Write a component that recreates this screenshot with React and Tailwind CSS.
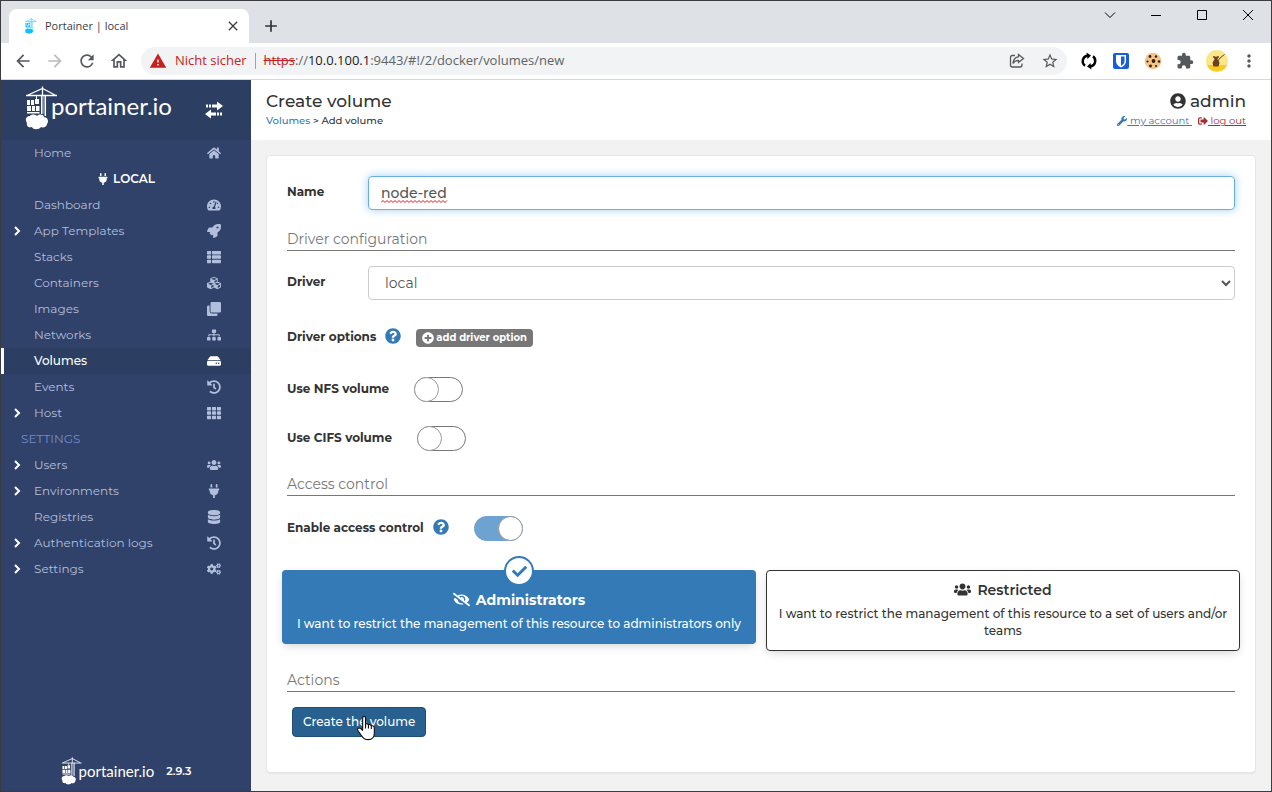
import React, { useState } from "react";
import {
  FaHome, FaTachometerAlt, FaRocket, FaThList, FaCubes, FaClone, FaSitemap, FaHdd, FaHistory,
  FaTh, FaUsers, FaPlug, FaDatabase, FaCogs, FaWrench, FaSignOutAlt, FaUserCircle,
  FaQuestionCircle, FaPlusCircle, FaEyeSlash, FaCheck,
} from "react-icons/fa";
import {
  MdArrowBack, MdArrowForward, MdRefresh, MdOutlineHome, MdWarning, MdStarBorder, MdMoreVert, MdClose, MdAdd, MdExtension,
} from "react-icons/md";

const NAV = [
  { label: "Home", Icon: FaHome },
  { heading: "LOCAL", Icon: FaPlug },
  { label: "Dashboard", Icon: FaTachometerAlt },
  { label: "App Templates", Icon: FaRocket, sub: true },
  { label: "Stacks", Icon: FaThList },
  { label: "Containers", Icon: FaCubes },
  { label: "Images", Icon: FaClone },
  { label: "Networks", Icon: FaSitemap },
  { label: "Volumes", Icon: FaHdd, active: true },
  { label: "Events", Icon: FaHistory },
  { label: "Host", Icon: FaTh, sub: true },
  { section: "SETTINGS" },
  { label: "Users", Icon: FaUsers, sub: true },
  { label: "Environments", Icon: FaPlug, sub: true },
  { label: "Registries", Icon: FaDatabase },
  { label: "Authentication logs", Icon: FaHistory, sub: true },
  { label: "Settings", Icon: FaCogs, sub: true },
];

function Crane({ className }) {
  return (
    <svg viewBox="0 0 34 44" className={className} fill="none" stroke="currentColor" aria-hidden="true">
      <path d="M1 9.500H32M3 9L17.500 2.500L30 9M17.500 0.500V9" strokeWidth="1.300" />
      <path d="M16.800 9V28M20.300 9V30" strokeWidth="1.500" />
      <path d="M18.600 10V28" strokeWidth="0.800" opacity="0.500" />
      <path d="M11.500 9.500V13" strokeWidth="1" />
      <path d="M10 13H14V18H10ZM2 14H5V19H2ZM6 14H9V19H6ZM2 20H6V25H2ZM7 20H10V25H7ZM11 20H14.500V25H11ZM2 26H14.500V27.500H2Z" fill="currentColor" stroke="none" />
      <path d="M5 30C6 28 10 28 12 30C14 28 18 28 19 31C23 31 24 36 22 38C22 41 18 42 16 41C14 44 8 44 7 41C4 42 1 40 2 37C-0.500 34 1 30 5 30Z" fill="currentColor" stroke="none" />
    </svg>
  );
}

function SwapIcon() {
  return (
    <svg viewBox="0 0 20 18" className="h-[18px] w-5" fill="currentColor" aria-hidden="true">
      <path d="M2 3.500h2v3H2zM5 3.500h2v3H5zM8 3.500h5V0.500L19 5L13 9.500V6.500H8z" />
      <path d="M18 11.500h-2v3h2zM15 11.500h-2v3h2zM12 11.500H7V8.500L1 13L7 17.500V14.500h5z" />
    </svg>
  );
}

function TabStrip() {
  return (
    <div className="flex h-[42px] items-end bg-[#dee1e6] pl-2">
      <div className="flex h-[34px] w-60 items-center rounded-t-lg bg-white pl-3 pr-2">
        <span className="flex w-5 justify-center text-[#13bef9]"><Crane className="h-4 w-4" /></span>
        <span className="ml-1 flex-1 text-[11px] text-[#3c4043]">Portainer | local</span>
        <button type="button" aria-label="Close tab" className="text-[#3c4043]"><MdClose size={16} /></button>
      </div>
      <button type="button" aria-label="New tab" className="ml-3 flex h-[34px] items-center text-[#303236]"><MdAdd size={20} /></button>
      <div className="ml-auto mr-[17px] flex h-[42px] items-start gap-[34px] pt-[7px] text-black">
        <button type="button" aria-label="Search tabs"><svg width="12" height="14" viewBox="0 0 12 14" fill="none" stroke="currentColor"><path d="M1 4.500L6 9.500L11 4.500" /></svg></button>
        <button type="button" aria-label="Minimize"><svg width="12" height="14" viewBox="0 0 12 14" stroke="currentColor"><path d="M1 7.500H11" /></svg></button>
        <button type="button" aria-label="Maximize"><svg width="12" height="14" viewBox="0 0 12 14" fill="none" stroke="currentColor"><path d="M1.500 2.500H10.500V11.500H1.500Z" /></svg></button>
        <button type="button" aria-label="Close"><svg width="12" height="14" viewBox="0 0 12 14" stroke="currentColor"><path d="M1 2L11 12M11 2L1 12" /></svg></button>
      </div>
    </div>
  );
}

function Toolbar() {
  return (
    <div className="flex h-[37px] items-center border-b border-[#d5d7da] bg-white pl-3 pr-3 text-[#55585c]">
      <div className="flex items-center gap-3">
        <button type="button" aria-label="Back"><MdArrowBack size={20} /></button>
        <button type="button" aria-label="Forward" className="text-[#b9bbbe]"><MdArrowForward size={20} /></button>
        <button type="button" aria-label="Reload"><MdRefresh size={20} /></button>
        <button type="button" aria-label="Start page"><MdOutlineHome size={20} /></button>
      </div>
      <div className="ml-3 flex h-7 min-w-0 flex-1 items-center rounded-full bg-[#f1f3f4] pl-2 pr-2 text-[13px]">
        <MdWarning size={18} className="text-[#c5221f]" />
        <span className="ml-2 whitespace-nowrap text-[#c5221f]">Nicht sicher</span>
        <span className="mx-2 h-4 w-px bg-[#9fa2a6]" />
        <span className="flex-1 whitespace-nowrap text-[#5f6368]">
          <s className="text-[#c5221f]">https</s>://<span className="text-[#202124]">10.0.100.1</span>:9443/#!/2/docker/volumes/new
        </span>
        <div className="flex items-center gap-4">
          <button type="button" aria-label="Share">
            <svg width="16" height="16" viewBox="0 0 16 16" fill="none" stroke="currentColor" strokeWidth="1.300"><path d="M6 2.500H3.500Q1.500 2.500 1.500 4.500V12Q1.500 14 3.500 14H11Q13 14 13 12V10.500" /><path d="M9.500 1.500L14.500 5.500L9.500 9.500V7.300Q6 7.200 4 10.500Q4.500 4.500 9.500 3.800Z" /></svg>
          </button>
          <button type="button" aria-label="Bookmark"><MdStarBorder size={18} /></button>
        </div>
      </div>
      <div className="ml-3 flex items-center gap-3">
        <button type="button" aria-label="Sync" className="text-black">
          <svg width="20" height="20" viewBox="0 0 20 20" fill="none" stroke="currentColor" strokeWidth="2.400"><path d="M8.500 4.500A5.800 5.800 0 0 0 6 14.800M11.500 15.500A5.800 5.800 0 0 0 14 5.200" /><path d="M7.500 1.500L12 4.500L8.500 8ZM12.500 18.500L8 15.500L11.500 12Z" fill="currentColor" stroke="none" /></svg>
        </button>
        <button type="button" aria-label="Password manager">
          <svg width="20" height="20" viewBox="0 0 20 20"><rect x="2" y="2" width="16" height="16" rx="2" fill="#175ddc" /><path d="M5 4H15V10Q15 14 10 16.500Q5 14 5 10Z" fill="#fff" /><path d="M10 5.500H13.500V10Q13.500 13 10 14.800Z" fill="#175ddc" /></svg>
        </button>
        <button type="button" aria-label="Cookies">
          <svg width="20" height="20" viewBox="0 0 20 20"><circle cx="10" cy="10" r="8.300" fill="#f2c588" /><g fill="#3a1d10"><circle cx="7" cy="5.500" r="1.400" /><circle cx="13" cy="5.500" r="1.200" /><circle cx="10.500" cy="10" r="1.900" /><circle cx="4.500" cy="10.500" r="1.100" /><circle cx="16" cy="10.500" r="1.300" /><circle cx="7.500" cy="15" r="1.400" /><circle cx="13" cy="15" r="1.100" /></g></svg>
        </button>
        <button type="button" aria-label="Extensions"><MdExtension size={18} className="mx-px" /></button>
        <button type="button" aria-label="Profile" className="-mx-px">
          <svg width="22" height="22" viewBox="0 0 22 22"><circle cx="11" cy="11" r="11" fill="#fbe68a" /><path d="M1 15A11 11 0 0 0 21 15Z" fill="#fbc91f" /><path d="M8 10H12.500L13.500 13L12.500 16.500H7.500L6.500 13Z" fill="#6b4121" /><circle cx="10" cy="8.500" r="1.900" fill="#6b4121" /><circle cx="8" cy="7" r="1" fill="#6b4121" /><circle cx="12" cy="7" r="1" fill="#6b4121" /><path d="M11 12L14 8L18.500 4.500" fill="none" stroke="#6b4121" /></svg>
        </button>
        <button type="button" aria-label="Menu"><MdMoreVert size={20} /></button>
      </div>
    </div>
  );
}

function NavRow({ item }) {
  const { Icon } = item;
  if (item.heading)
    return <li className="flex h-[26px] items-center justify-center gap-1 font-semibold text-white"><Icon size={12} />{item.heading}</li>;
  if (item.section) return <li className="flex h-[26px] items-center pl-5 text-[#738bc8]">{item.section}</li>;
  return (
    <li>
      <a
        href="#"
        className={
          item.active
            ? "flex h-[26px] items-center border-l-[3px] border-white bg-[#2d3e63] pr-[29px] font-medium text-white"
            : "flex h-[26px] items-center border-l-[3px] border-transparent pr-[29px] text-[#b2bfdc]"
        }
      >
        <span className="flex w-[30px] pl-[9px] text-white">
          {item.sub && <svg width="8" height="10" viewBox="0 0 8 10" fill="none" stroke="currentColor" strokeWidth="2"><path d="M2 1L6 5L2 9" /></svg>}
        </span>
        <span className="flex-1">{item.label}</span>
        <span className="flex w-4 justify-center"><Icon size={14} /></span>
      </a>
    </li>
  );
}

function Sidebar() {
  return (
    <aside className="flex w-[250px] shrink-0 flex-col bg-[#30426a]">
      <div className="flex h-[60px] items-center bg-[#2d3e63] pl-6 pr-[27px] text-white">
        <Crane className="mb-1 h-11 w-[34px]" />
        <span className="-ml-2 flex-1 pb-2 font-['Lato',sans-serif] text-2xl leading-7">portainer.io</span>
        <button type="button" aria-label="Toggle sidebar"><SwapIcon /></button>
      </div>
      <ul>{NAV.map((item, i) => <NavRow key={i} item={item} />)}</ul>
      <div className="mt-auto flex items-center justify-center pb-1.5 text-white">
        <Crane className="h-7 w-[22px]" />
        <span className="-ml-1 font-['Lato',sans-serif] text-[15px] leading-5">portainer.io</span>
        <span className="ml-3 text-[11px] font-semibold">2.9.3</span>
      </div>
    </aside>
  );
}

function Switch({ id, checked, onChange }) {
  return (
    <span className="relative flex h-[25px] w-[49px]">
      <input id={id} type="checkbox" role="switch" checked={checked} onChange={onChange} className="peer h-[25px] w-[49px] appearance-none rounded-full border border-[#777] bg-white checked:border-[#6ea2d0] checked:bg-[#6ea2d0]" />
      <span className="pointer-events-none absolute left-0 top-0 h-[25px] w-[25px] rounded-full border border-[#999] bg-white peer-checked:left-6" />
    </span>
  );
}

function Section({ children }) {
  return <h2 className="border-b border-[#777] pb-0.5 text-sm leading-[18px] text-[#777]">{children}</h2>;
}

function Help({ label }) {
  return <button type="button" aria-label={label} className="ml-[9px] pb-1 text-[#337ab7]"><FaQuestionCircle size={16} /></button>;
}

function VolumeForm() {
  const [name, setName] = useState("node-red");
  const [nfs, setNfs] = useState(false);
  const [cifs, setCifs] = useState(false);
  const [access, setAccess] = useState(true);
  return (
    <form onSubmit={(e) => e.preventDefault()} className="flex flex-1 flex-col rounded-sm border border-[#e6e6e6] bg-white px-5 pt-5 shadow-[0_1px_1px_rgba(0,0,0,0.05)]">
      <div className="flex items-center">
        <label htmlFor="name" className="w-[81px] pb-0.5 font-bold">Name</label>
        <div className="relative flex min-w-0 flex-1">
          <input id="name" value={name} onChange={(e) => setName(e.target.value)} spellCheck={false} className="h-[34px] w-full rounded-sm border border-[#66afe9] px-3 text-sm font-medium text-[#555] shadow-[0_0_8px_rgba(102,175,233,0.6)] outline-none" />
          <svg width="67" height="3" viewBox="0 0 67 3" className="pointer-events-none absolute left-[13px] top-6" fill="none" stroke="#e11" aria-hidden="true"><path d="M0 2.500L2 0.500L4 2.500L6 0.500L8 2.500L10 0.500L12 2.500L14 0.500L16 2.500L18 0.500L20 2.500L22 0.500L24 2.500L26 0.500L28 2.500L30 0.500L32 2.500L34 0.500L36 2.500L38 0.500L40 2.500L42 0.500L44 2.500L46 0.500L48 2.500L50 0.500L52 2.500L54 0.500L56 2.500L58 0.500L60 2.500L62 0.500L64 2.500L66 0.500" /></svg>
        </div>
      </div>
      <div className="mt-5"><Section>Driver configuration</Section></div>
      <div className="mt-[15px] flex items-center">
        <label htmlFor="driver" className="w-[81px] pb-0.5 font-bold">Driver</label>
        <select id="driver" className="h-[34px] min-w-0 flex-1 rounded-sm border border-[#ccc] bg-white pl-3 text-sm text-[#555]"><option>local</option></select>
      </div>
      <div className="mt-6 flex h-7 items-center">
        <span className="pb-0.5 font-bold">Driver options</span>
        <Help label="About driver options" />
        <button type="button" className="ml-[15px] flex h-[18px] items-center gap-0.5 rounded-sm bg-[#777] px-1.5 text-[10px] font-bold text-white"><FaPlusCircle size={12} />add driver option</button>
      </div>
      <div className="mt-[25px] flex h-[25px] items-center gap-[25px]">
        <label htmlFor="nfs" className="pb-0.5 font-bold">Use NFS volume</label>
        <Switch id="nfs" checked={nfs} onChange={() => setNfs(!nfs)} />
      </div>
      <div className="mt-6 flex h-[25px] items-center gap-[25px]">
        <label htmlFor="cifs" className="pb-0.5 font-bold">Use CIFS volume</label>
        <Switch id="cifs" checked={cifs} onChange={() => setCifs(!cifs)} />
      </div>
      <div className="mt-6"><Section>Access control</Section></div>
      <div className="mt-5 flex h-[25px] items-center">
        <label htmlFor="access" className="pb-0.5 font-bold">Enable access control</label>
        <Help label="About access control" />
        <span className="ml-[25px]"><Switch id="access" checked={access} onChange={() => setAccess(!access)} /></span>
      </div>
      <div className="-mx-[5px] mt-[29px] grid grid-cols-2 items-start gap-2.5">
        <label className="relative flex flex-col items-center rounded-sm bg-[#337ab7] px-2 pb-3 pt-[21px] text-center text-white shadow-[0_3px_10px_-2px_rgba(0,0,0,0.2)]">
          <input type="radio" name="ownership" defaultChecked className="sr-only" />
          <span className="absolute -top-[14px] flex h-[30px] w-[30px] items-center justify-center rounded-full border-2 border-[#337ab7] bg-white text-[#337ab7]"><FaCheck size={15} /></span>
          <span className="flex items-center gap-1.5 text-sm font-bold leading-4"><FaEyeSlash size={17} />Administrators</span>
          <span className="mt-[7px] font-medium leading-[17px]">I want to restrict the management of this resource to administrators only</span>
        </label>
        <label className="flex flex-col items-center rounded-sm border border-[#333] bg-white px-2 pb-[11px] pt-2.5 text-center shadow-[0_3px_10px_-2px_rgba(0,0,0,0.2)]">
          <input type="radio" name="ownership" className="sr-only" />
          <span className="flex items-center gap-1.5 text-sm font-semibold leading-4"><FaUsers size={17} />Restricted</span>
          <span className="mt-[7px] font-medium leading-[17px]">I want to restrict the management of this resource to a set of users and/or teams</span>
        </label>
      </div>
      <div className="mt-5"><Section>Actions</Section></div>
      <div className="relative ml-[5px] mt-[15px] self-start">
        <button type="submit" className="h-[30px] rounded-sm border border-[#204d74] bg-[#286090] px-2.5 font-medium text-white">Create the volume</button>
        <svg width="20" height="26" viewBox="0 0 18 23" className="pointer-events-none absolute left-16 top-2" fill="#fff" stroke="#111" aria-hidden="true">
          <path d="M6 13V2.500Q6 1 7.300 1T8.600 2.500V8Q9.700 7 11 8.500Q12.500 7.800 13.700 9.500Q16.500 9 16.500 12V16Q16.500 22 11 22Q7 22 5 18.500L1.500 13.500Q1 11.500 3 11.500Q4.500 11.500 6 14M8.600 8V12M11.200 8.500V12M13.800 9.500V12.500" />
        </svg>
      </div>
    </form>
  );
}

export default function App() {
  return (
    <div className="flex min-h-screen flex-col border border-[#3b3b42] bg-white font-['Open_Sans',sans-serif]">
      <TabStrip />
      <Toolbar />
      <div className="flex flex-1 font-['Montserrat','Inter',sans-serif] text-xs text-[#333]">
        <Sidebar />
        <main className="flex min-w-0 flex-1 flex-col bg-[#f2f2f2]">
          <header className="flex h-[60px] justify-between bg-white pl-[15px] pr-[25px] pt-2.5">
            <div>
              <h1 className="text-[17px] font-medium leading-[22px]">Create volume</h1>
              <p className="text-[10px] font-medium leading-[17px]"><a href="#" className="text-[#337ab7]">Volumes</a> &gt; Add volume</p>
            </div>
            <div className="flex flex-col items-end">
              <div className="flex items-center gap-1 text-[17px] font-medium leading-[22px]"><FaUserCircle size={16} />admin</div>
              <div className="flex gap-1.5 text-[10px] leading-[17px]">
                <a href="#" className="flex items-center text-[#337ab7] underline"><FaWrench size={10} />&nbsp;my account&nbsp;</a>
                <a href="#" className="flex items-center text-[#a02f32] underline"><FaSignOutAlt size={10} />&nbsp;log out</a>
              </div>
            </div>
          </header>
          <div className="flex flex-1 flex-col px-[15px] pb-[18px] pt-[15px]"><VolumeForm /></div>
        </main>
      </div>
    </div>
  );
}
